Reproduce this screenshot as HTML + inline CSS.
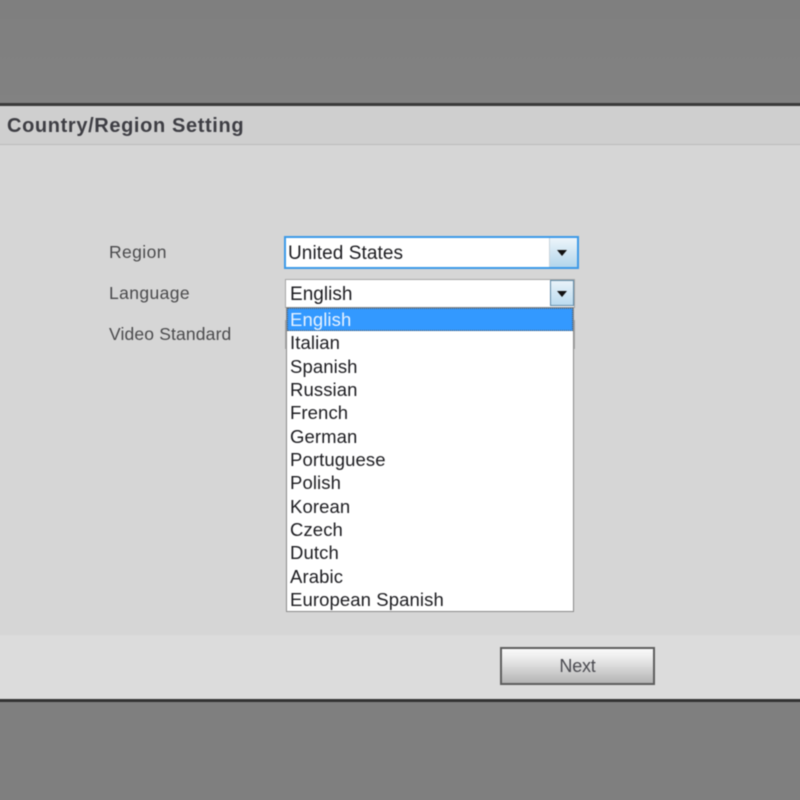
<!DOCTYPE html>
<html>
<head>
<meta charset="utf-8">
<style>
html,body{margin:0;padding:0;width:800px;height:800px;overflow:hidden;background:#808080;font-family:"Liberation Sans",sans-serif;}
#c{position:relative;width:800px;height:800px;overflow:hidden;contain:paint;}
#w{position:absolute;left:0;top:0;width:800px;height:800px;filter:blur(.4px);}
.a{position:absolute;box-sizing:border-box;}
.t{position:absolute;white-space:nowrap;line-height:20px;}
.lbl{font-size:17.5px;color:#4a4a4c;letter-spacing:.4px;}
.item{left:290px;font-size:18.5px;color:#1c1c20;letter-spacing:.1px;}
.arrow{position:absolute;width:0;height:0;border-left:5.5px solid transparent;border-right:5.5px solid transparent;border-top:6px solid #111;}
</style>
</head>
<body>
<div id="c">
<div id="w">
<div class="a" style="left:-10px;top:-10px;width:820px;height:114px;background:linear-gradient(#7f7f7f,#828282);"></div>
<div class="a" style="left:-10px;top:103px;width:820px;height:3px;background:#3a3a3a;"></div>
<div class="a" style="left:-10px;top:106px;width:820px;height:39px;background:#cfcfcf;border-bottom:1px solid #bcbcbc;"></div>
<div class="a" style="left:-10px;top:145px;width:820px;height:490px;background:#d6d6d6;"></div>
<div class="a" style="left:-10px;top:635px;width:820px;height:64px;background:#dcdcdc;"></div>
<div class="a" style="left:-10px;top:699px;width:820px;height:3px;background:#333;"></div>
<div class="a" style="left:-10px;top:702px;width:820px;height:108px;background:#7f7f7f;"></div>

<div class="t" style="left:7px;top:116px;font-size:20px;font-weight:bold;color:#3e3e44;letter-spacing:.63px;">Country/Region Setting</div>

<div class="t lbl" style="left:109px;top:241.5px;">Region</div>
<div class="t lbl" style="left:109px;top:282.5px;">Language</div>
<div class="t lbl" style="left:109px;top:323.5px;letter-spacing:.15px;">Video Standard</div>

<!-- Region select -->
<div class="a" style="left:284px;top:236px;width:295px;height:33px;background:#fff;border:2px solid #3c9ae8;"></div>
<div class="a" style="left:549px;top:238px;width:28px;height:29px;background:linear-gradient(#eef5fa,#b4d6ec);border-left:1px solid #c8d4dc;"></div>
<div class="arrow" style="left:557px;top:250px;"></div>
<div class="t" style="left:288px;top:244px;font-size:19px;color:#1c1c20;letter-spacing:.08px;">United States</div>

<!-- Video Standard select edge behind list -->
<div class="a" style="left:285px;top:320px;width:290px;height:29px;background:#fff;border:1px solid #a6a6a6;"></div>

<!-- Language select -->
<div class="a" style="left:285px;top:279px;width:290px;height:29px;background:#fff;border:1px solid #a6a6a6;"></div>
<div class="a" style="left:550px;top:280px;width:24px;height:26px;background:linear-gradient(#e8f2f9,#bcdcf0);border:1px solid #5f8aa8;"></div>
<div class="arrow" style="left:556.5px;top:291px;"></div>
<div class="t" style="left:290px;top:285px;font-size:19px;color:#1c1c20;letter-spacing:.02px;">English</div>

<!-- Dropdown -->
<div class="a" style="left:285.5px;top:307px;width:288.5px;height:305px;background:#fff;border:1px solid #8a8a8a;"></div>
<div class="a" style="left:286.5px;top:308px;width:286.5px;height:23px;background:#3399ff;border:1px dotted #555;"></div>

<div class="t item" style="top:310px;color:#e6f2ff;">English</div>
<div class="t item" style="top:333px;">Italian</div>
<div class="t item" style="top:357px;">Spanish</div>
<div class="t item" style="top:380px;">Russian</div>
<div class="t item" style="top:403px;">French</div>
<div class="t item" style="top:427px;">German</div>
<div class="t item" style="top:450px;">Portuguese</div>
<div class="t item" style="top:473px;">Polish</div>
<div class="t item" style="top:497px;">Korean</div>
<div class="t item" style="top:520px;">Czech</div>
<div class="t item" style="top:543px;">Dutch</div>
<div class="t item" style="top:567px;">Arabic</div>
<div class="t item" style="top:590px;">European Spanish</div>

<!-- Next button -->
<div class="a" style="left:500px;top:647px;width:155px;height:38px;background:linear-gradient(#fbfbfb,#e6e6e6 35%,#b4b4b4);border:2px solid #5e5e5e;"></div>
<div class="t" style="left:500px;top:656px;width:155px;text-align:center;font-size:18px;color:#4a4a50;letter-spacing:-.2px;">Next</div>
</div>
</div>
</body>
</html>
